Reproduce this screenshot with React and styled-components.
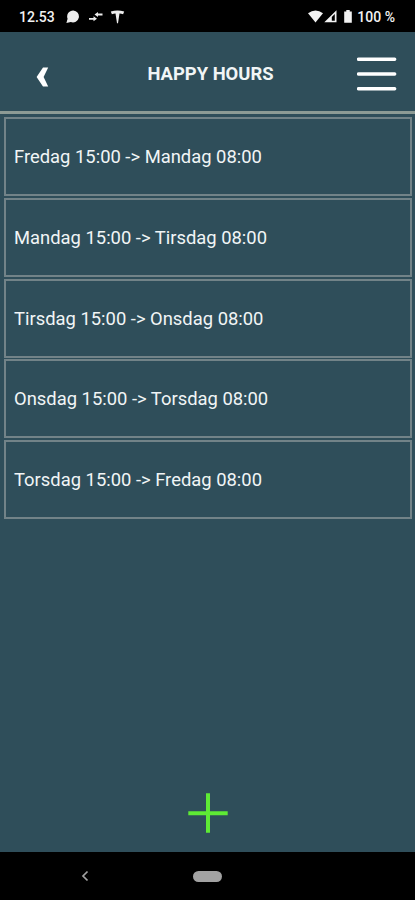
import styled, { createGlobalStyle } from "styled-components";

const GlobalStyle = createGlobalStyle`
*{
box-sizing:border-box;
}
body{
margin:0;
background:#2f4e5a;
font-family:Roboto,"Liberation Sans",sans-serif;
}
`
const Screen = styled.div`
width:100%;
height:100vh;
display:flex;
flex-direction:column;
overflow:hidden;
background:#2f4e5a;
color:#f1f5f6;
`
const StatusBar = styled.div`
flex:none;
height:32px;
padding:2px 20px 0 19px;
display:flex;
align-items:center;
justify-content:space-between;
background:black;
color:#f2f2f2;
`
const StatusGroup = styled.div`
display:flex;
align-items:center;
gap:${({$gap})=>$gap};
`
const StatusText = styled.span`
font-size:14px;
font-weight:500;
white-space:nowrap;
`
const Icon = styled.svg`
display:block;
flex:none;
`
const Header = styled.header`
flex:none;
height:82px;
padding:0 18px 0 36px;
display:grid;
grid-template-columns:28px 1fr 40px;
align-items:center;
border-bottom:3px solid #8d9b95;
margin-bottom:3px;
`
const HeaderButton = styled.button`
display:flex;
padding:${({$padding})=>$padding || 0};
border:none;
background:none;
color:white;
cursor:pointer;
`
const Title = styled.h1`
margin:0;
padding:3px 0 0 0;
text-align:center;
font-size:18.4px;
font-weight:700;
white-space:nowrap;
`
const List = styled.ul`
flex:1;
margin:0;
padding:0 3px 0 4px;
list-style:none;
display:flex;
flex-direction:column;
gap:1.75px;
`
const Row = styled.li`
flex:none;
height:79px;
padding:0 8px;
display:flex;
align-items:center;
border:2px solid #728388;
font-size:18.4px;
white-space:nowrap;
`
const Footer = styled.div`
flex:none;
height:59px;
display:flex;
justify-content:center;
align-items:flex-start;
`
const NavBar = styled.nav`
flex:none;
height:48px;
display:grid;
grid-template-columns:170px 75px 170px;
align-items:center;
justify-items:center;
background:black;
`
const HomePill = styled.span`
width:29px;
height:11px;
border-radius:6px;
background:#a2a2a2;
`

const periods = [
    {from:"Fredag 15:00", to:"Mandag 08:00"},
    {from:"Mandag 15:00", to:"Tirsdag 08:00"},
    {from:"Tirsdag 15:00", to:"Onsdag 08:00"},
    {from:"Onsdag 15:00", to:"Torsdag 08:00"},
    {from:"Torsdag 15:00", to:"Fredag 08:00"},
]

function NotificationIcons(){
    return (
        <Icon width="62" height="16" viewBox="0 0 62 16" fill="#ededed">
            <path d="M7.300 1.500a6 6 0 1 1-2.500 11.600L.4 14l1.200-4.200A6 6 0 0 1 7.300 1.500z" />
            <path d="M23 8.900h4.500V7.300l3.500 2.500-3.500 2.500v-1.600H23zM36.500 6.400H32V8l-3.500-2.500L32 3v1.600h4.500z" />
            <path d="M44.800 2.600Q51.500.2 58.200 2.600L57.100 5.200Q55 4.300 53.500 4.400L52 14.300h-1L49.500 4.400Q48 4.300 45.900 5.200z" />
        </Icon>
    )
}

function SystemIcons(){
    return (
        <Icon width="45" height="16" viewBox="0 0 45 16" fill="#f2f2f2">
            <path d="M0 4.300Q7.500-1.400 15 4.300L7.500 13.500z" />
            <path d="M16.300 13.300 28.500 1.300v12zM23.800 7.900v3.800h3V5z" fillRule="evenodd" />
            <path d="M38.300 1h3.400v1.400h2.100v11.400h-7.600V2.400h2.100z" />
        </Icon>
    )
}

export default function App(){
    return (
        <>
        <GlobalStyle />
        <Screen>
            <StatusBar>
                <StatusGroup $gap="11px">
                    <StatusText>12.53</StatusText>
                    <NotificationIcons />
                </StatusGroup>
                <StatusGroup $gap="4px">
                    <SystemIcons />
                    <StatusText>100 %</StatusText>
                </StatusGroup>
            </StatusBar>

            <Header>
                <HeaderButton aria-label="Tilbage" $padding="11px 0 0">
                    <Icon width="13" height="20" viewBox="0 0 13 20">
                        <path d="M7 .5h5.200L7.600 10l4.600 9.500H7L.6 10z" fill="currentColor" />
                    </Icon>
                </HeaderButton>
                <Title>HAPPY HOURS</Title>
                <HeaderButton aria-label="Menu" $padding="4px 0 0">
                    <Icon width="40" height="34" viewBox="0 0 40 34">
                        <path d="M1.500 2.300h36.200M1.500 17h36.200M1.500 31.700h36.200" stroke="currentColor" strokeWidth="3.400" strokeLinecap="round" />
                    </Icon>
                </HeaderButton>
            </Header>

            <List>
                {periods.map((period)=>(
                    <Row key={period.from}>{period.from} -&gt; {period.to}</Row>
                ))}
            </List>

            <Footer>
                <HeaderButton aria-label="Tilføj">
                    <Icon width="40" height="40" viewBox="0 0 40 40">
                        <path d="M20 .3v39.400M.3 20.300h39.400" stroke="#5eea35" strokeWidth="4" />
                    </Icon>
                </HeaderButton>
            </Footer>

            <NavBar>
                <Icon width="8" height="12" viewBox="0 0 8 12">
                    <path d="M6.500 1.500 2 6l4.500 4.500" fill="none" stroke="#a2a2a2" strokeWidth="1.700" />
                </Icon>
                <HomePill />
            </NavBar>
        </Screen>
        </>
    )
}
